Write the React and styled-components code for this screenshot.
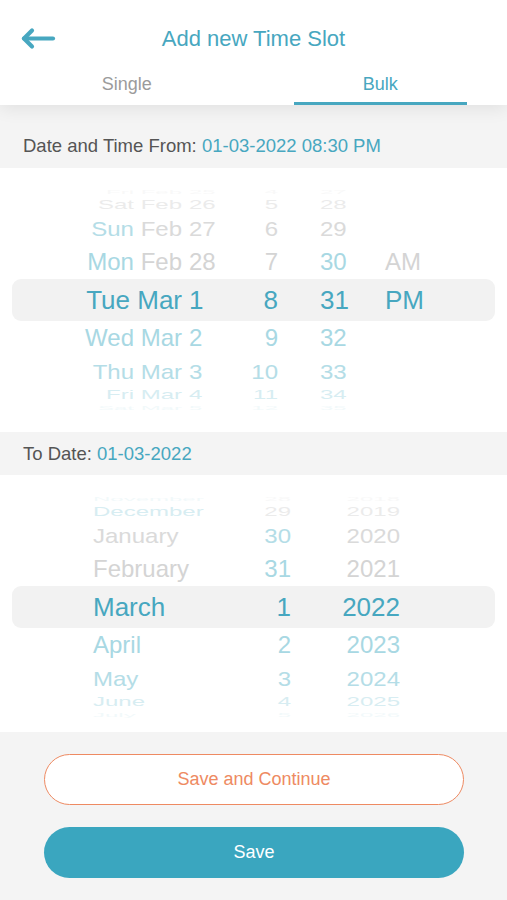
import React from 'react'
import styled, { createGlobalStyle } from 'styled-components'

const TEAL = '#47a7c0'
const LIGHT = '#a8d8e3'
const GRAY = '#d4d4d4'
const ORANGE = '#ee8a62'

// height / vertical squash / fade for each distance from the selected row
const wheel = {
  0: { h: 42, s: 1, op: 1 },
  1: { h: 34, s: 1, op: 1 },
  2: { h: 33, s: 0.85, op: 0.85 },
  3: { h: 14, s: 0.55, op: 0.45 },
  4: { h: 12, s: 0.22, op: 0.15 }
}

const timeRows = [
  { o: -4, date: [['Fri Feb', GRAY]], day: ['25', GRAY], hour: ['4', GRAY], min: ['27', GRAY] },
  { o: -3, date: [['Sat Feb', GRAY]], day: ['26', GRAY], hour: ['5', GRAY], min: ['28', GRAY] },
  { o: -2, date: [['Sun', LIGHT], [' Feb', GRAY]], day: ['27', GRAY], hour: ['6', GRAY], min: ['29', GRAY] },
  { o: -1, date: [['Mon', LIGHT], [' Feb', GRAY]], day: ['28', GRAY], hour: ['7', GRAY], min: ['30', LIGHT], ap: ['AM', GRAY] },
  { o: 0, date: [['Tue Mar', TEAL]], day: ['1', TEAL], hour: ['8', TEAL], min: ['31', TEAL], ap: ['PM', TEAL] },
  { o: 1, date: [['Wed Mar', LIGHT]], day: ['2', LIGHT], hour: ['9', LIGHT], min: ['32', LIGHT] },
  { o: 2, date: [['Thu Mar', LIGHT]], day: ['3', LIGHT], hour: ['10', LIGHT], min: ['33', LIGHT] },
  { o: 3, date: [['Fri Mar', LIGHT]], day: ['4', LIGHT], hour: ['11', LIGHT], min: ['34', LIGHT] },
  { o: 4, date: [['Sat Mar', LIGHT]], day: ['5', LIGHT], hour: ['12', LIGHT], min: ['35', LIGHT] }
]

const dateRows = [
  { o: -4, month: ['November', LIGHT], day: ['28', GRAY], year: ['2018', GRAY] },
  { o: -3, month: ['December', LIGHT], day: ['29', GRAY], year: ['2019', GRAY] },
  { o: -2, month: ['January', GRAY], day: ['30', LIGHT], year: ['2020', GRAY] },
  { o: -1, month: ['February', GRAY], day: ['31', LIGHT], year: ['2021', GRAY] },
  { o: 0, month: ['March', TEAL], day: ['1', TEAL], year: ['2022', TEAL] },
  { o: 1, month: ['April', LIGHT], day: ['2', LIGHT], year: ['2023', LIGHT] },
  { o: 2, month: ['May', LIGHT], day: ['3', LIGHT], year: ['2024', LIGHT] },
  { o: 3, month: ['June', LIGHT], day: ['4', LIGHT], year: ['2025', LIGHT] },
  { o: 4, month: ['July', LIGHT], day: ['5', LIGHT], year: ['2026', LIGHT] }
]

const GlobalStyle = createGlobalStyle`
  body {
    margin: 0;
    background: #f4f4f4;
    font-family: "Liberation Sans", Arial, sans-serif;
  }
`

const Screen = styled.div`
  width: 507px;
  height: 900px;
  display: flex;
  flex-direction: column;
  background: #f4f4f4;
  overflow: hidden;
`

const Header = styled.header`
  position: relative;
  z-index: 1;
  background: #fff;
  box-shadow: 0 4px 16px rgba(0, 0, 0, 0.08);
`

const TopBar = styled.div`
  display: grid;
  grid-template-columns: 1fr auto 1fr;
  align-items: center;
  height: 26px;
  padding-top: 26px;
`

const BackButton = styled.button`
  justify-self: start;
  display: flex;
  margin-left: 19px;
  padding: 0;
  border: 0;
  background: none;
`

const Title = styled.h1`
  margin: 0;
  font-size: 22px;
  font-weight: 400;
  line-height: 26px;
  color: ${TEAL};
`

const Tabs = styled.div`
  display: grid;
  grid-template-columns: 1fr 1fr;
`

const Tab = styled.div`
  padding-top: 22px;
  font-size: 18px;
  line-height: 20px;
  text-align: center;
  color: ${p => (p.$active ? TEAL : '#9b9b9b')};

  &::after {
    content: '';
    display: block;
    height: 3px;
    margin: 8px 40px 0;
    background: ${p => (p.$active ? TEAL : 'transparent')};
  }
`

const Label = styled.div`
  padding: ${p => p.$top}px 23px ${p => p.$bottom}px;
  font-size: 18.5px;
  line-height: 22px;
  color: #555;

  span {
    color: ${TEAL};
  }
`

const Picker = styled.div`
  background: #fff;
  padding: ${p => p.$top}px 0 ${p => p.$bottom}px;
`

const Row = styled.div`
  display: flex;
  align-items: center;
  height: ${p => wheel[p.$d].h}px;
  margin: 0 12px;
  border-radius: 9px;
  background: ${p => (p.$d === 0 ? '#f2f2f2' : 'transparent')};
  font-size: ${p => (p.$d === 0 ? 26 : 24)}px;
  line-height: 1;
  white-space: nowrap;
  opacity: ${p => wheel[p.$d].op};
`

const RowInner = styled.div`
  display: flex;
  align-items: center;
  width: 100%;
  padding-left: ${p => p.$indent || 0}px;
  transform: scaleY(${p => p.$scale});
`

const Cell = styled.span`
  box-sizing: border-box;
  flex: none;
  width: ${p => (p.$w ? `${p.$w}px` : 'auto')};
  padding-left: ${p => p.$pad || 0}px;
  text-align: ${p => p.$align || 'left'};
  color: ${p => p.$color};
`

const Part = styled.span`
  color: ${p => p.$color};
`

const Footer = styled.footer`
  flex: 1;
  display: flex;
  flex-direction: column;
  gap: 22px;
  padding: 22px 43px 0 44px;
  background: #f4f4f4;
`

const Button = styled.button`
  height: 51px;
  border-radius: 26px;
  font-family: "Liberation Sans", Arial, sans-serif;
  font-size: 18px;
  border: ${p => (p.$outline ? `1.5px solid ${ORANGE}` : '0')};
  background: ${p => (p.$outline ? '#fff' : '#3aa6bf')};
  color: ${p => (p.$outline ? ORANGE : '#fff')};
`

const BackArrow = () => (
  <svg width='38' height='26' viewBox='0 0 38 26' fill='none' stroke={TEAL} strokeWidth='4.2' strokeLinecap='round' strokeLinejoin='round'>
    <path d='M5 12.5 H34' />
    <path d='M13 4.5 L5 12.5 L13 20.5' />
  </svg>
)

const TimeWheel = () => (
  <Picker $top={18} $bottom={18}>
    {timeRows.map(r => {
      const d = Math.abs(r.o)
      return (
        <Row key={r.o} $d={d}>
          <RowInner $scale={wheel[d].s}>
            <Cell $w={170} $align='right'>
              {r.date.map(([t, c]) => <Part key={t} $color={c}>{t}</Part>)}
            </Cell>
            <Cell $w={56} $pad={7} $color={r.day[1]}>{r.day[0]}</Cell>
            <Cell $w={40} $align='right' $color={r.hour[1]}>{r.hour[0]}</Cell>
            <Cell $w={42} />
            <Cell $w={65} $color={r.min[1]}>{r.min[0]}</Cell>
            {r.ap && <Cell $color={r.ap[1]}>{r.ap[0]}</Cell>}
          </RowInner>
        </Row>
      )
    })}
  </Picker>
)

const DateWheel = () => (
  <Picker $top={18} $bottom={11}>
    {dateRows.map(r => {
      const d = Math.abs(r.o)
      return (
        <Row key={r.o} $d={d}>
          <RowInner $scale={wheel[d].s} $indent={81}>
            <Cell $w={160} $color={r.month[1]}>{r.month[0]}</Cell>
            <Cell $w={38} $align='right' $color={r.day[1]}>{r.day[0]}</Cell>
            <Cell $w={109} $align='right' $color={r.year[1]}>{r.year[0]}</Cell>
          </RowInner>
        </Row>
      )
    })}
  </Picker>
)

export default function App () {
  return (
    <Screen>
      <GlobalStyle />
      <Header>
        <TopBar>
          <BackButton aria-label='Back'><BackArrow /></BackButton>
          <Title>Add new Time Slot</Title>
        </TopBar>
        <Tabs>
          <Tab>Single</Tab>
          <Tab $active>Bulk</Tab>
        </Tabs>
      </Header>

      <Label $top={30} $bottom={11}>
        Date and Time From: <span>01-03-2022 08:30 PM</span>
      </Label>
      <TimeWheel />

      <Label $top={11} $bottom={10}>
        To Date: <span>01-03-2022</span>
      </Label>
      <DateWheel />

      <Footer>
        <Button $outline>Save and Continue</Button>
        <Button>Save</Button>
      </Footer>
    </Screen>
  )
}
